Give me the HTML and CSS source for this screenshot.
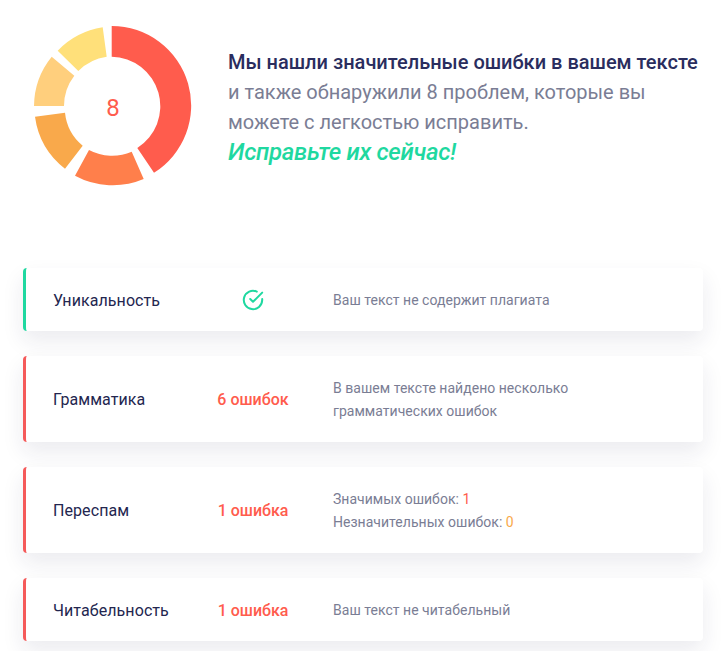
FILE: index.html
```html
<!DOCTYPE html>
<html lang="en">
<head>
    <meta charset="UTF-8">
    <meta name="viewport" content="width=device-width, initial-scale=1.0">
    <title>Проверка текста</title>
    <link rel="stylesheet" href="styles.css">
</head>
<body>
    <section class="summary">
        <div class="donut">
            <svg width="170" height="172" viewBox="28 20 170 172">
                <path fill="#FF5C4D" d="M111.7 26 A79.5 79.5 0 0 1 154 172.8 L137.3 148 A49.5 49.5 0 0 0 111.7 56.7 Z"/>
                <path fill="#FF7F4B" d="M143.7 179 A79.5 79.5 0 0 1 75 175.7 L89 150 A49.5 49.5 0 0 0 131.7 151.7 Z"/>
                <path fill="#F9A94B" d="M65 168.7 A79.5 79.5 0 0 1 35 116.7 L65 112.7 A49.5 49.5 0 0 0 82.7 145.7 Z"/>
                <path fill="#FFCF7D" d="M34 106 A79.5 79.5 0 0 1 51.7 56.7 L74.3 75.7 A49.5 49.5 0 0 0 64 106 Z"/>
                <path fill="#FFE07A" d="M57.7 50.7 A79.5 79.5 0 0 1 102.7 27.3 L106.7 56.7 A49.5 49.5 0 0 0 78.3 71 Z"/>
            </svg>
            <span class="donut-count">8</span>
        </div>
        <div class="summary-text">
            <p class="summary-title">Мы нашли значительные ошибки в вашем тексте</p>
            <p>и также обнаружили 8 проблем, которые вы<br>можете с легкостью исправить.</p>
            <p class="summary-action">Исправьте их сейчас!</p>
        </div>
    </section>

    <div class="cards">
        <div class="card card-ok">
            <div class="card-name">Уникальность</div>
            <div class="card-status">
                <svg class="check" width="22" height="22" viewBox="0 0 22 22" fill="none" stroke="#1FD8A0" stroke-width="2" stroke-linecap="round" stroke-linejoin="round">
                    <path d="M20.2 10 V11 A9.2 9.2 0 1 1 14.8 2.6"/>
                    <path d="M20.2 3.6 L11 12.8 L8.2 10"/>
                </svg>
            </div>
            <div class="card-desc">Ваш текст не содержит плагиата</div>
        </div>
        <div class="card card-error">
            <div class="card-name">Грамматика</div>
            <div class="card-status">6 ошибок</div>
            <div class="card-desc">В вашем тексте найдено несколько<br>грамматических ошибок</div>
        </div>
        <div class="card card-error">
            <div class="card-name">Переспам</div>
            <div class="card-status">1 ошибка</div>
            <div class="card-desc">Значимых ошибок: <span class="num-red">1</span><br>Незначительных ошибок: <span class="num-orange">0</span></div>
        </div>
        <div class="card card-error">
            <div class="card-name">Читабельность</div>
            <div class="card-status">1 ошибка</div>
            <div class="card-desc">Ваш текст не читабельный</div>
        </div>
    </div>
</body>
</html>
```

FILE: styles.css
```css
body {
    font-family: Roboto, "Liberation Sans", sans-serif;
    margin: 0;
    padding: 0 0 10px;
    background-color: #FFFFFF;
}

p {
    margin: 0;
}

.summary {
    display: flex;
    align-items: center;
    gap: 30px;
    padding: 20px 0 0 28px;
}

.donut {
    position: relative;
    width: 170px;
    height: 172px;
    flex-shrink: 0;
}

.donut svg {
    display: block;
}

.donut-count {
    position: absolute;
    left: 0;
    right: 0;
    top: 74px;
    text-align: center;
    font-size: 24px;
    line-height: 28px;
    color: #FF5C4D;
}

.summary-text {
    margin-top: 2px;
    font-size: 20px;
    line-height: 30px;
    color: #7A7D94;
}

.summary-title {
    font-weight: 500;
    color: #2A2D5E;
}

.summary-action {
    font-size: 24px;
    font-style: italic;
    font-weight: 500;
    letter-spacing: -0.3px;
    color: #1FD8A0;
}

.cards {
    display: flex;
    flex-direction: column;
    gap: 25px;
    margin: 76px 22px 0 23px;
}

.card {
    display: flex;
    align-items: center;
    box-sizing: border-box;
    padding: 20px 30px 19px 27px;
    background-color: white;
    border-left: 3px solid;
    border-radius: 4px;
    box-shadow: 0 10px 22px rgba(31, 36, 81, 0.09);
}

.card-ok {
    border-left-color: #1FD8A0;
}

.card-error {
    border-left-color: #F55A5A;
}

.card-name {
    width: 147px;
    font-size: 16px;
    letter-spacing: 0.08px;
    color: #23264F;
}

.card-status {
    width: 106px;
    text-align: center;
    font-size: 16px;
    font-weight: 500;
    color: #FF5C4D;
}

.check {
    display: block;
    margin: 0 auto;
}

.card-desc {
    margin-left: 27px;
    padding-top: 1px;
    font-size: 14px;
    line-height: 23px;
    letter-spacing: 0.03px;
    color: #7A7D94;
}

.num-red {
    color: #FF5C4D;
}

.num-orange {
    color: #F9A94B;
}
```
